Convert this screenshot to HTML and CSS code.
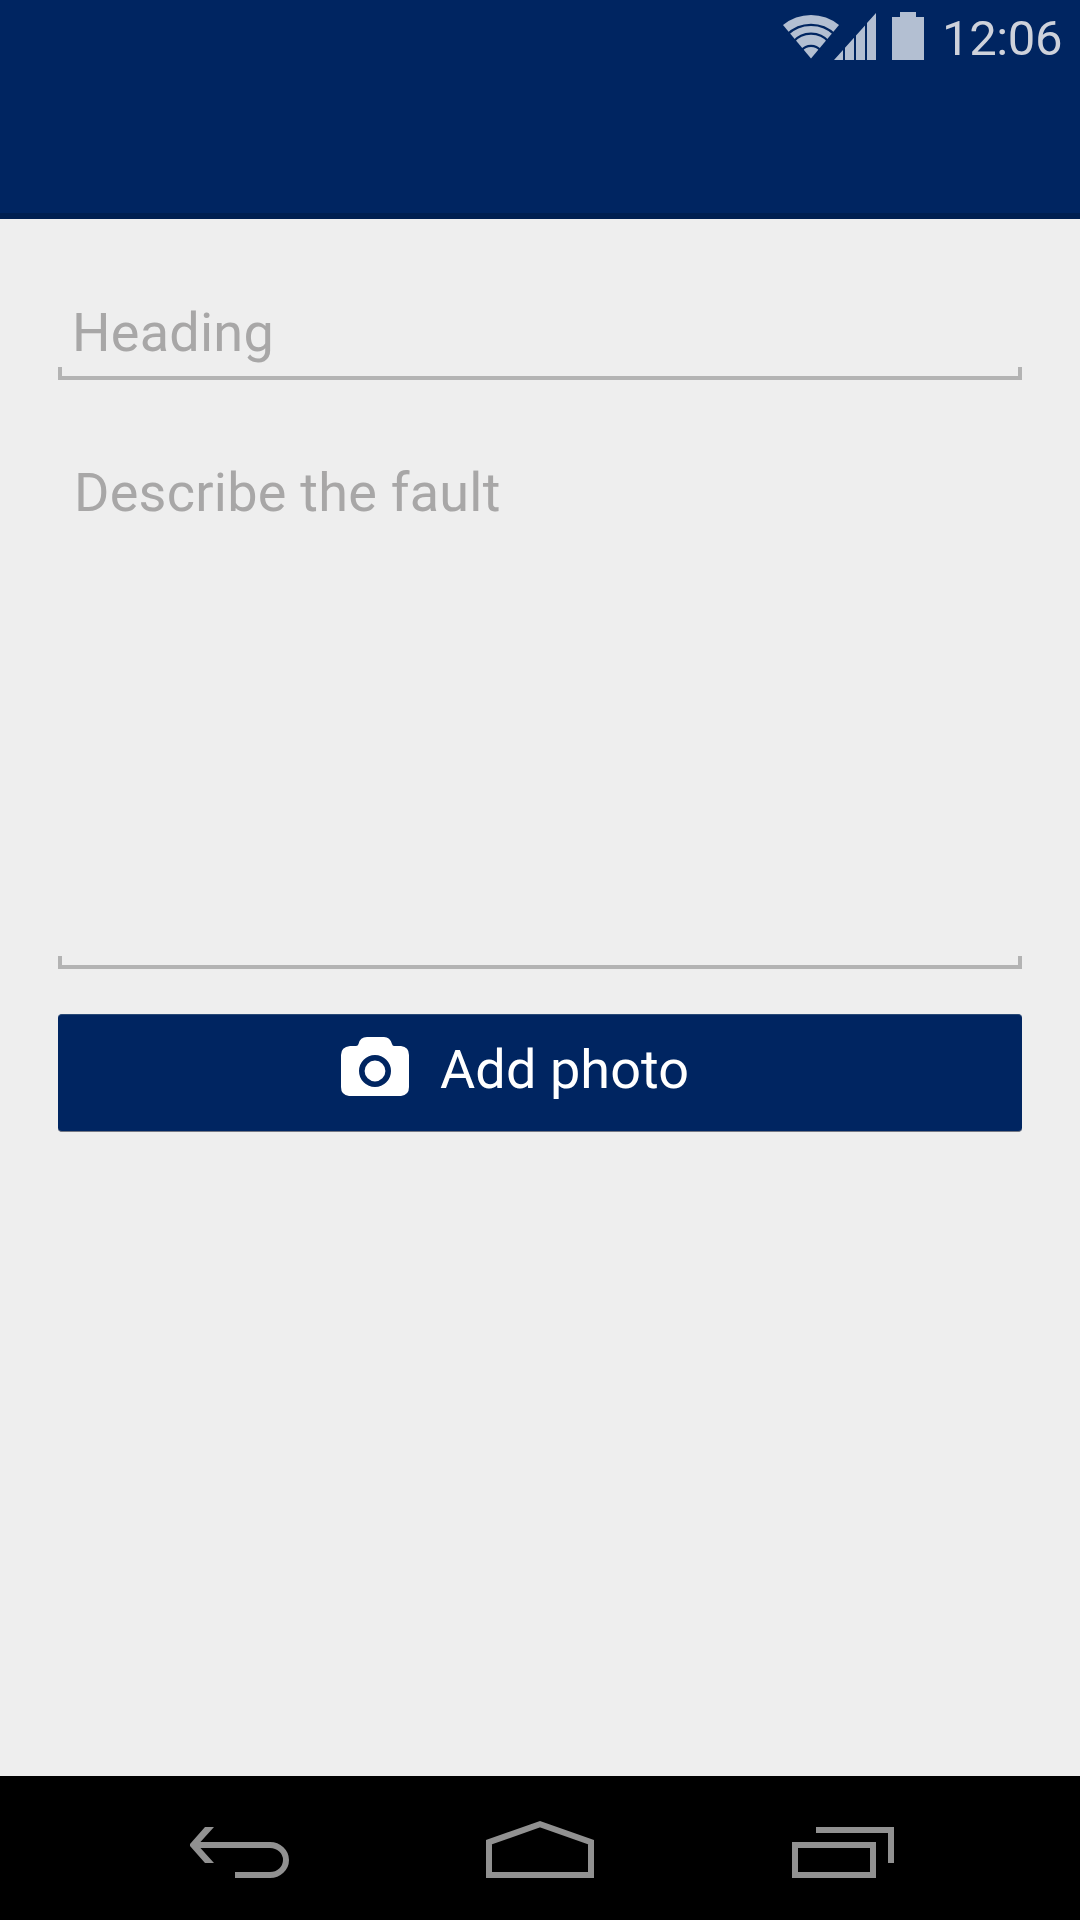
FILE: index.html
```html
<!DOCTYPE html>
<html lang="en">
<head>
<meta charset="utf-8">
<title>Report a fault</title>
<link rel="stylesheet" href="styles.css">
</head>
<body>
<div class="screen">
  <header class="app-bar">
    <div class="status">
      <svg class="status-wifi" width="56" height="60" viewBox="783 0 56 60" fill="#b3bfd2">
        <path d="M811 58.6 L783 25.1 A43.6 43.6 0 0 1 839 25.1Z"/>
        <g fill="none" stroke="#002561" stroke-width="2.2">
          <path d="M787 34.8A34 34 0 0 1 835 34.8"/>
          <path d="M793 42A23.7 23.7 0 0 1 829 42"/>
          <path d="M801.500 50.400A12.3 12.3 0 0 1 820.500 50.400"/>
        </g>
      </svg>
      <svg class="status-signal" width="42" height="60" viewBox="834 0 42 60" fill="#b3bfd2">
        <path d="M834 60L843 50V60ZM845 47.7L854 37.7V60H845ZM856 35.4L865 25.4V60H856ZM867 23.1L876 13V60H867Z"/>
      </svg>
      <svg class="status-battery" width="32" height="60" viewBox="892 0 32 60" fill="#b3bfd2">
        <path d="M892 17H900V12H916V17H924V60H892Z"/>
      </svg>
      <span class="clock">12:06</span>
    </div>
  </header>
  <main class="form">
    <div class="field field-heading"><span class="hint">Heading</span></div>
    <div class="field field-description"><span class="hint">Describe the fault</span></div>
    <div class="button">
      <svg class="camera" width="68" height="60" viewBox="341 1036 68 60">
        <path fill="#fff" d="M350 1046H356Q358 1046 358.500 1044Q360 1037 367 1037H384Q390 1037 392 1044Q392.500 1046 394 1046H401Q409 1047 409 1055V1087Q409 1095 401 1096H349Q341 1095 341 1087V1055Q341 1047 350 1046Z"/>
        <circle cx="375" cy="1071" r="13.2" fill="none" stroke="#002561" stroke-width="5.600"/>
      </svg>
      <span class="button-label">Add photo</span>
    </div>
  </main>
  <nav class="nav-bar">
    <svg width="99" height="60" viewBox="190 1820 99 60" fill="none" stroke="#919191" stroke-width="6">
      <path d="M199 1845H270A16 15 0 0 1 270 1875H235"/>
      <path fill="#919191" stroke="none" d="M190 1844L205 1827H214L200 1842.500V1847.500L214 1863H205L190 1846Z"/>
    </svg>
    <svg width="108" height="60" viewBox="486 1820 108 60" fill="none" stroke="#919191" stroke-width="6">
      <path d="M489 1842.200L540 1824.200L591 1842.200V1875H489Z"/>
    </svg>
    <svg width="102" height="60" viewBox="792 1820 102 60" fill="none" stroke="#919191" stroke-width="6">
      <path d="M795 1845H873V1875H795ZM816 1830H891V1863"/>
    </svg>
  </nav>
</div>
</body>
</html>
```
FILE: styles.css
```css
* { box-sizing: border-box; }

body {
  margin: 0;
  background: #eee;
  font-family: Roboto, "Liberation Sans", sans-serif;
}

svg { display: block; flex: none; }

.screen {
  display: flex;
  flex-direction: column;
  width: 1080px;
  height: 1920px;
}

.app-bar {
  height: 219px;
  background: #002561;
  border-bottom: 6px solid #001f50;
}

.status {
  display: flex;
  height: 75px;
  padding-left: 783px;
}

.status-signal { margin-left: -5px; }
.status-battery { margin-left: 16px; }

.clock {
  margin-left: 18px;
  font-size: 49px;
  line-height: 77px;
  letter-spacing: -0.4px;
  color: #ced2db;
  white-space: nowrap;
}

.form {
  display: flex;
  flex-direction: column;
  flex: 1;
  padding: 75px 58px 0;
}

.field {
  display: flex;
  align-items: flex-start;
  border-bottom: 4px solid #b3b3b3;
  background:
    linear-gradient(#b3b3b3, #b3b3b3) left bottom / 4px 9px no-repeat,
    linear-gradient(#b3b3b3, #b3b3b3) right bottom / 4px 9px no-repeat;
}

.field-heading { height: 86px; padding: 7px 14px 0; }
.field-description { height: 529px; margin-top: 60px; padding: 21px 16px 0; }

.hint {
  font-size: 54px;
  line-height: 64px;
  letter-spacing: 0.25px;
  color: #a8a7a7;
  white-space: nowrap;
}

.button {
  display: flex;
  align-items: flex-start;
  height: 118px;
  margin-top: 45px;
  padding: 21px 0 0 283px;
  gap: 31px;
  border-top: 1px solid #284976;
  border-bottom: 1px solid #747884;
  border-radius: 4px;
  background: #002561;
}

.button-label {
  padding-top: 2px;
  font-size: 54px;
  line-height: 64px;
  letter-spacing: 0.1px;
  color: #fff;
  white-space: nowrap;
}

.nav-bar {
  display: grid;
  grid-template-columns: 296px 306px 102px;
  height: 144px;
  padding: 44px 186px 0 190px;
  background: #000;
}
```
